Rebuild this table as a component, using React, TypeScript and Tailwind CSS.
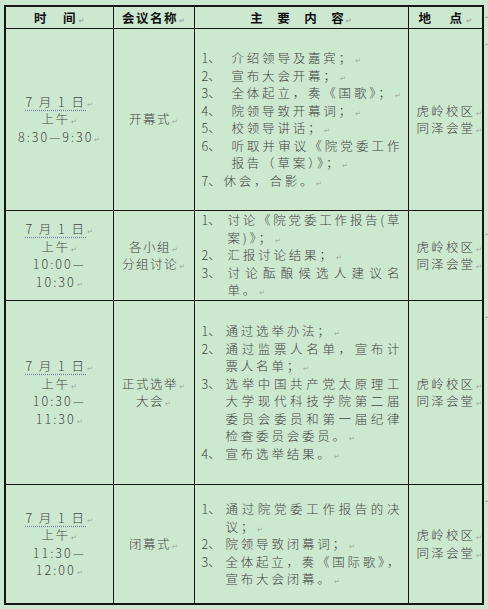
import React from "react";

type Item = { n: string; lines: string[]; w: number };

const rows: {
  h: string;
  time: string[];
  name: string[];
  items: Item[];
  markPad: string;
}[] = [
  {
    h: "h-[182px]",
    time: ["上午", "8:30—9:30"],
    name: ["开幕式"],
    markPad: "pt-[13px]",
    items: [
      { n: "1、", lines: ["介绍领导及嘉宾；"], w: 30 },
      { n: "2、", lines: ["宣布大会开幕；"], w: 30 },
      { n: "3、", lines: ["全体起立，奏《国歌》；"], w: 30 },
      { n: "4、", lines: ["院领导致开幕词；"], w: 30 },
      { n: "5、", lines: ["校领导讲话；"], w: 30 },
      { n: "6、", lines: ["听取并审议《院党委工作", "报告（草案）》；"], w: 30 },
      { n: "7、", lines: ["休会，合影。"], w: 22 },
    ],
  },
  {
    h: "h-[90px]",
    time: ["上午", "10:00—", "10:30"],
    name: ["各小组", "分组讨论"],
    markPad: "pt-[21px]",
    items: [
      { n: "1、", lines: ["讨论《院党委工作报告(草", "案)》；"], w: 26 },
      { n: "2、", lines: ["汇报讨论结果；"], w: 26 },
      { n: "3、", lines: ["讨论酝酿候选人建议名", "单。"], w: 26 },
    ],
  },
  {
    h: "h-[184px]",
    time: ["上午", "10:30—", "11:30"],
    name: ["正式选举", "大会"],
    markPad: "pt-[14px]",
    items: [
      { n: "1、", lines: ["通过选举办法；"], w: 24 },
      { n: "2、", lines: ["通过监票人名单，宣布计", "票人名单；"], w: 24 },
      {
        n: "3、",
        lines: ["选举中国共产党太原理工", "大学现代科技学院第二届", "委员会委员和第一届纪律", "检查委员会委员。"],
        w: 24,
      },
      { n: "4、", lines: ["宣布选举结果。"], w: 24 },
    ],
  },
  {
    h: "h-[120px]",
    time: ["上午", "11:30—", "12:00"],
    name: ["闭幕式"],
    markPad: "pt-[14px]",
    items: [
      { n: "1、", lines: ["通过院党委工作报告的决", "议；"], w: 24 },
      { n: "2、", lines: ["院领导致闭幕词；"], w: 24 },
      { n: "3、", lines: ["全体起立，奏《国际歌》，", "宣布大会闭幕。"], w: 24 },
    ],
  },
];

function Ret() {
  return (
    <span className="ml-[1px] font-['DejaVu_Sans',sans-serif] text-[7px] leading-[0] tracking-normal text-[#a0a0a0]">
      ↵
    </span>
  );
}

function Mark() {
  return <div className="font-['DejaVu_Sans',sans-serif] text-[5px] leading-[6px] text-[#9a9a9a]">↵</div>;
}

const cell = "border border-[#161616] align-middle";

export default function App() {
  return (
    <div className="h-[609px] w-[488px] overflow-hidden bg-[#cce8cf] pl-[4px] pt-[5px] font-['Noto_Sans_CJK_SC','Noto_Sans',sans-serif] text-[12.5px] font-light leading-[17.5px] text-[#444]">
      <table className="w-[483px] table-fixed border-collapse">
        <colgroup>
          <col className="w-[108px]" />
          <col className="w-[81px]" />
          <col className="w-[214px]" />
          <col className="w-[75px]" />
          <col className="w-[5px]" />
        </colgroup>
        <tbody>
          <tr className="h-[22px] font-bold text-[#111]">
            <td className={`${cell} border-l-2 border-t-2 text-center tracking-[2px]`}>
              时　间<Ret />
            </td>
            <td className={`${cell} border-t-2 text-center tracking-[1.5px]`}>
              会议名称<Ret />
            </td>
            <td className={`${cell} border-t-2 text-center tracking-[1px]`}>
              主　要　内　容<Ret />
            </td>
            <td className={`${cell} border-r-2 border-t-2 text-center tracking-[3px]`}>
              地　点<Ret />
            </td>
            <td className="pl-[1px] align-middle">
              <Mark />
            </td>
          </tr>
          {rows.map((r, i) => {
            const last = i === rows.length - 1;
            const bottom = last ? "border-b-2" : "";
            return (
              <tr key={i} className={r.h}>
                <td className={`${cell} ${bottom} border-l-2 text-center tracking-[2px]`}>
                  <div>
                    <span className="underline decoration-[#7a7aa8] decoration-dotted underline-offset-[3px]">
                      7 月 1 日
                    </span>
                    <Ret />
                  </div>
                  {r.time.map((t, j) => (
                    <div key={j}>
                      {t}
                      {t.endsWith("—") ? null : <Ret />}
                    </div>
                  ))}
                </td>
                <td className={`${cell} ${bottom} text-center tracking-[1.5px]`}>
                  {r.name.map((t, j) => (
                    <div key={j}>
                      {t}
                      <Ret />
                    </div>
                  ))}
                </td>
                <td className={`${cell} ${bottom} pl-[7px] pr-[8px]`}>
                  {r.items.map((it, j) => (
                    <div key={j} className="flex">
                      <div className="shrink-0" style={{ width: it.w }}>
                        {it.n}
                      </div>
                      <div className="min-w-0 flex-1">
                        {it.lines.map((l, k) =>
                          k < it.lines.length - 1 ? (
                            <div key={k} className="whitespace-nowrap text-justify [text-align-last:justify]">
                              {l}
                            </div>
                          ) : (
                            <div key={k} className="whitespace-nowrap tracking-[2.8px]">
                              {l}
                              <Ret />
                            </div>
                          )
                        )}
                      </div>
                    </div>
                  ))}
                </td>
                <td className={`${cell} ${bottom} border-r-2 pl-[8px] tracking-[2.2px]`}>
                  <div className="whitespace-nowrap">
                    虎岭校区
                    <Ret />
                  </div>
                  <div className="whitespace-nowrap">
                    同泽会堂
                    <Ret />
                  </div>
                </td>
                <td className={`pl-[1px] align-top ${r.markPad}`}>
                  <Mark />
                </td>
              </tr>
            );
          })}
        </tbody>
      </table>
    </div>
  );
}
